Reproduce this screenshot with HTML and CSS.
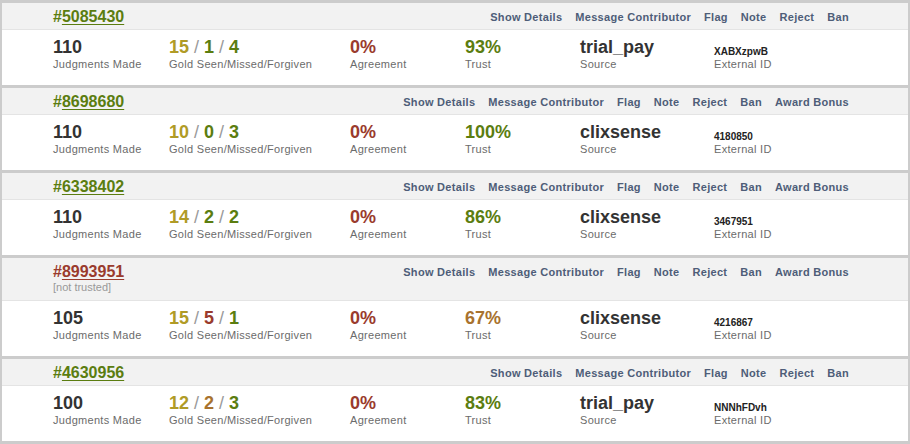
FILE: index.html
```html
<!DOCTYPE html>
<html>
<head>
<meta charset="utf-8">
<link rel="stylesheet" href="styles.css">
</head>
<body>
<div class="list">

  <div class="card">
    <div class="head">
      <div class="ident">
        <div class="cid good">#<a href="#">5085430</a></div>
      </div>
      <div class="actions">
        <a href="#">Show Details</a><a href="#">Message Contributor</a><a href="#">Flag</a><a href="#">Note</a><a href="#">Reject</a><a href="#">Ban</a>
      </div>
    </div>
    <div class="stats">
      <div class="stat c1"><div class="val dark">110</div><div class="lbl">Judgments Made</div></div>
      <div class="stat c2"><div class="val"><span class="gold">15</span><span class="sl"> / </span><span class="green">1</span><span class="sl"> / </span><span class="green">4</span></div><div class="lbl">Gold Seen/Missed/Forgiven</div></div>
      <div class="stat c3"><div class="val red">0%</div><div class="lbl">Agreement</div></div>
      <div class="stat c4"><div class="val green">93%</div><div class="lbl">Trust</div></div>
      <div class="stat c5"><div class="val dark">trial_pay</div><div class="lbl">Source</div></div>
      <div class="stat c6"><div class="val ext">XABXzpwB</div><div class="lbl">External ID</div></div>
    </div>
  </div>

  <div class="card">
    <div class="head">
      <div class="ident">
        <div class="cid good">#<a href="#">8698680</a></div>
      </div>
      <div class="actions">
        <a href="#">Show Details</a><a href="#">Message Contributor</a><a href="#">Flag</a><a href="#">Note</a><a href="#">Reject</a><a href="#">Ban</a><a href="#">Award Bonus</a>
      </div>
    </div>
    <div class="stats">
      <div class="stat c1"><div class="val dark">110</div><div class="lbl">Judgments Made</div></div>
      <div class="stat c2"><div class="val"><span class="gold">10</span><span class="sl"> / </span><span class="green">0</span><span class="sl"> / </span><span class="green">3</span></div><div class="lbl">Gold Seen/Missed/Forgiven</div></div>
      <div class="stat c3"><div class="val red">0%</div><div class="lbl">Agreement</div></div>
      <div class="stat c4"><div class="val green">100%</div><div class="lbl">Trust</div></div>
      <div class="stat c5"><div class="val dark">clixsense</div><div class="lbl">Source</div></div>
      <div class="stat c6"><div class="val ext">4180850</div><div class="lbl">External ID</div></div>
    </div>
  </div>

  <div class="card">
    <div class="head">
      <div class="ident">
        <div class="cid good">#<a href="#">6338402</a></div>
      </div>
      <div class="actions">
        <a href="#">Show Details</a><a href="#">Message Contributor</a><a href="#">Flag</a><a href="#">Note</a><a href="#">Reject</a><a href="#">Ban</a><a href="#">Award Bonus</a>
      </div>
    </div>
    <div class="stats">
      <div class="stat c1"><div class="val dark">110</div><div class="lbl">Judgments Made</div></div>
      <div class="stat c2"><div class="val"><span class="gold">14</span><span class="sl"> / </span><span class="green">2</span><span class="sl"> / </span><span class="green">2</span></div><div class="lbl">Gold Seen/Missed/Forgiven</div></div>
      <div class="stat c3"><div class="val red">0%</div><div class="lbl">Agreement</div></div>
      <div class="stat c4"><div class="val green">86%</div><div class="lbl">Trust</div></div>
      <div class="stat c5"><div class="val dark">clixsense</div><div class="lbl">Source</div></div>
      <div class="stat c6"><div class="val ext">3467951</div><div class="lbl">External ID</div></div>
    </div>
  </div>

  <div class="card">
    <div class="head">
      <div class="ident">
        <div class="cid bad">#<a href="#">8993951</a></div>
        <div class="note">[not trusted]</div>
      </div>
      <div class="actions">
        <a href="#">Show Details</a><a href="#">Message Contributor</a><a href="#">Flag</a><a href="#">Note</a><a href="#">Reject</a><a href="#">Ban</a><a href="#">Award Bonus</a>
      </div>
    </div>
    <div class="stats">
      <div class="stat c1"><div class="val dark">105</div><div class="lbl">Judgments Made</div></div>
      <div class="stat c2"><div class="val"><span class="gold">15</span><span class="sl"> / </span><span class="red">5</span><span class="sl"> / </span><span class="green">1</span></div><div class="lbl">Gold Seen/Missed/Forgiven</div></div>
      <div class="stat c3"><div class="val red">0%</div><div class="lbl">Agreement</div></div>
      <div class="stat c4"><div class="val brown">67%</div><div class="lbl">Trust</div></div>
      <div class="stat c5"><div class="val dark">clixsense</div><div class="lbl">Source</div></div>
      <div class="stat c6"><div class="val ext">4216867</div><div class="lbl">External ID</div></div>
    </div>
  </div>

  <div class="card">
    <div class="head">
      <div class="ident">
        <div class="cid good">#<a href="#">4630956</a></div>
      </div>
      <div class="actions">
        <a href="#">Show Details</a><a href="#">Message Contributor</a><a href="#">Flag</a><a href="#">Note</a><a href="#">Reject</a><a href="#">Ban</a>
      </div>
    </div>
    <div class="stats">
      <div class="stat c1"><div class="val dark">100</div><div class="lbl">Judgments Made</div></div>
      <div class="stat c2"><div class="val"><span class="gold">12</span><span class="sl"> / </span><span class="brown">2</span><span class="sl"> / </span><span class="green">3</span></div><div class="lbl">Gold Seen/Missed/Forgiven</div></div>
      <div class="stat c3"><div class="val red">0%</div><div class="lbl">Agreement</div></div>
      <div class="stat c4"><div class="val green">83%</div><div class="lbl">Trust</div></div>
      <div class="stat c5"><div class="val dark">trial_pay</div><div class="lbl">Source</div></div>
      <div class="stat c6"><div class="val ext">NNNhFDvh</div><div class="lbl">External ID</div></div>
    </div>
  </div>

</div>
</body>
</html>
```

FILE: styles.css
```css
html, body {
  margin: 0;
  padding: 0;
}
body {
  background: #cccccc;
  font-family: "Liberation Sans", Arial, sans-serif;
  width: 910px;
  height: 444px;
  overflow: hidden;
}
.list {
  display: flex;
  flex-direction: column;
  gap: 3px;
  padding: 3px 2px;
}
.card {
  background: #ffffff;
}
.head {
  display: flex;
  justify-content: space-between;
  align-items: flex-start;
  background: #f2f2f2;
  border-bottom: 1px solid #e4e4e4;
  padding: 5px 59px 3px 51px;
}
.cid {
  font-size: 16px;
  font-weight: bold;
  line-height: 18px;
}
.cid a {
  color: inherit;
  text-decoration: underline;
  text-underline-offset: 2px;
}
.cid.good { color: #5b7d10; }
.cid.bad { color: #9a3b2d; }
.note {
  font-size: 11px;
  color: #999999;
  line-height: 12px;
  margin-bottom: 4px;
}
.actions {
  display: flex;
  gap: 13px;
  line-height: 18px;
}
.actions a {
  font-size: 11px;
  font-weight: bold;
  letter-spacing: 0.3px;
  color: #4e5d78;
  text-decoration: none;
}
.stats {
  display: flex;
  height: 55px;
  box-sizing: border-box;
  padding: 7px 0 0 51px;
}
.stat.c1 { width: 116px; }
.stat.c2 { width: 181px; }
.stat.c3 { width: 115px; }
.stat.c4 { width: 115px; }
.stat.c5 { width: 134px; }
.stat.c6 { width: 120px; }
.val {
  font-size: 18px;
  font-weight: bold;
  line-height: 20px;
  height: 20px;
  white-space: nowrap;
}
.val.ext {
  font-size: 10px;
  line-height: 29px;
  color: #222222;
}
.lbl {
  font-size: 11px;
  line-height: 15px;
  letter-spacing: 0.3px;
  color: #6b6b6b;
  white-space: nowrap;
}
.dark { color: #333333; }
.gold { color: #b09b26; }
.green { color: #5b7d10; }
.red { color: #9a3b2d; }
.brown { color: #a8722e; }
.sl {
  color: #9a9a9a;
  font-weight: normal;
}
```
